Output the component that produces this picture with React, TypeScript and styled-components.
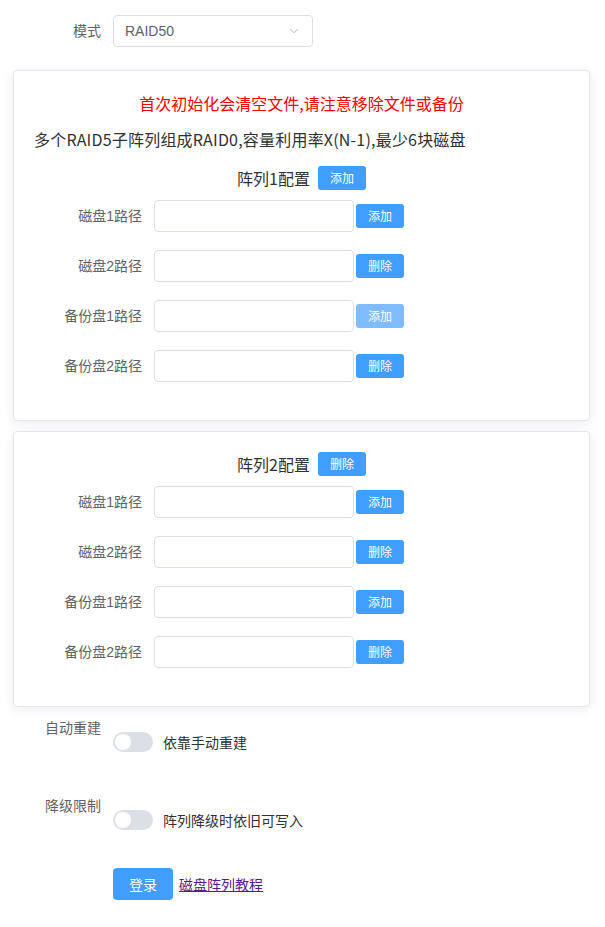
import React from "react";
import styled, { createGlobalStyle } from "styled-components";
import { ChevronDown } from "lucide-react";

const Global = createGlobalStyle`
  html, body { margin: 0; padding: 0; background: #fff; }
  body {
    font-family: "Liberation Sans", "Noto Sans CJK SC", sans-serif;
    font-size: 14px;
    color: #606266;
  }
  * { box-sizing: border-box; }
`;

const Page = styled.div`
  padding: 15px 15px 20px 13px;
`;

const TopItem = styled.div`
  display: flex;
  align-items: center;
  margin-bottom: 23px;
`;

const Label = styled.div<{ $w: number }>`
  width: ${(p) => p.$w}px;
  flex-shrink: 0;
  padding-right: 12px;
  text-align: right;
  line-height: 32px;
  font-size: 14px;
  color: #606266;
`;

const Select = styled.div`
  width: 200px;
  height: 32px;
  border: 1px solid #dcdfe6;
  border-radius: 4px;
  padding: 0 11px;
  display: flex;
  align-items: center;
  justify-content: space-between;
  color: #606266;
  font-size: 14px;
  background: #fff;
  svg { color: #a8abb2; }
`;

const Card = styled.div<{ $mt?: number }>`
  margin-top: ${(p) => p.$mt ?? 0}px;
  border: 1px solid #e4e7ed;
  border-radius: 4px;
  background: #fff;
  box-shadow: 0 2px 12px rgba(0, 0, 0, 0.08);
  padding: 20px;
`;

const Warn = styled.div`
  color: #ff0000;
  text-align: center;
  font-size: 16px;
  line-height: 24px;
  font-family: "Noto Sans CJK SC", sans-serif;
  margin-bottom: 12px;
`;

const Desc = styled.div`
  color: #303133;
  font-size: 16px;
  line-height: 24px;
  font-family: "Noto Sans CJK SC", sans-serif;
  letter-spacing: 0.2px;
  margin-bottom: 15px;
`;

const Header = styled.div`
  display: flex;
  justify-content: center;
  align-items: center;
  gap: 8px;
  height: 24px;
  margin-bottom: 10px;
  font-size: 16px;
  color: #303133;
  font-family: "Noto Sans CJK SC", sans-serif;
`;

const SmallBtn = styled.button<{ $light?: boolean }>`
  height: 24px;
  width: 48px;
  padding: 0;
  border: none;
  border-radius: 3px;
  background: ${(p) => (p.$light ? "#7fbcff" : "#409eff")};
  color: #fff;
  font-size: 12px;
  font-family: "Noto Sans CJK SC", sans-serif;
  line-height: 24px;
  cursor: pointer;
`;

const Row = styled.div`
  display: flex;
  align-items: center;
  margin-bottom: 18px;
`;

const Input = styled.input`
  width: 200px;
  height: 32px;
  border: 1px solid #dcdfe6;
  border-radius: 4px;
  padding: 0 11px;
  outline: none;
  margin-right: 2px;
`;

const SwitchItem = styled.div`
  display: flex;
  margin-top: 5px;
  margin-bottom: 38px;
`;

const SwitchContent = styled.div`
  display: flex;
  align-items: center;
  padding-top: 20px;
  height: 40px;
  gap: 10px;
  font-size: 14px;
  color: #303133;
`;

const Switch = styled.span`
  position: relative;
  width: 40px;
  height: 20px;
  border-radius: 10px;
  background: #dcdfe6;
  display: inline-block;
  &::after {
    content: "";
    position: absolute;
    top: 2px;
    left: 2px;
    width: 16px;
    height: 16px;
    border-radius: 50%;
    background: #fff;
  }
`;

const Footer = styled.div`
  display: flex;
  align-items: center;
  padding-left: 100px;
  margin-top: 38px;
  gap: 6px;
`;

const MainBtn = styled.button`
  height: 32px;
  width: 60px;
  border: none;
  border-radius: 4px;
  background: #409eff;
  color: #fff;
  font-size: 14px;
  font-family: "Noto Sans CJK SC", sans-serif;
`;

const Link = styled.a`
  color: #551a8b;
  text-decoration: underline;
  font-size: 14px;
`;

type RowDef = { label: string; btn: string; light?: boolean };

const rows1: RowDef[] = [
  { label: "磁盘1路径", btn: "添加" },
  { label: "磁盘2路径", btn: "删除" },
  { label: "备份盘1路径", btn: "添加", light: true },
  { label: "备份盘2路径", btn: "删除" },
];
const rows2: RowDef[] = [
  { label: "磁盘1路径", btn: "添加" },
  { label: "磁盘2路径", btn: "删除" },
  { label: "备份盘1路径", btn: "添加" },
  { label: "备份盘2路径", btn: "删除" },
];

function Rows({ rows }: { rows: RowDef[] }) {
  return (
    <>
      {rows.map((r, i) => (
        <Row key={i}>
          <Label $w={120}>{r.label}</Label>
          <Input />
          <SmallBtn $light={r.light}>{r.btn}</SmallBtn>
        </Row>
      ))}
    </>
  );
}

export default function App() {
  return (
    <>
      <Global />
      <Page>
        <TopItem>
          <Label $w={100}>模式</Label>
          <Select>
            <span>RAID50</span>
            <ChevronDown size={14} strokeWidth={1.5} />
          </Select>
        </TopItem>

        <Card>
          <Warn>首次初始化会清空文件,请注意移除文件或备份</Warn>
          <Desc>多个RAID5子阵列组成RAID0,容量利用率X(N-1),最少6块磁盘</Desc>
          <Header>
            阵列1配置<SmallBtn>添加</SmallBtn>
          </Header>
          <Rows rows={rows1} />
        </Card>

        <Card $mt={10}>
          <Header>
            阵列2配置<SmallBtn>删除</SmallBtn>
          </Header>
          <Rows rows={rows2} />
        </Card>

        <SwitchItem>
          <Label $w={100}>自动重建</Label>
          <SwitchContent>
            <Switch />
            依靠手动重建
          </SwitchContent>
        </SwitchItem>

        <SwitchItem>
          <Label $w={100}>降级限制</Label>
          <SwitchContent>
            <Switch />
            阵列降级时依旧可写入
          </SwitchContent>
        </SwitchItem>

        <Footer>
          <MainBtn>登录</MainBtn>
          <Link href="#">磁盘阵列教程</Link>
        </Footer>
      </Page>
    </>
  );
}
